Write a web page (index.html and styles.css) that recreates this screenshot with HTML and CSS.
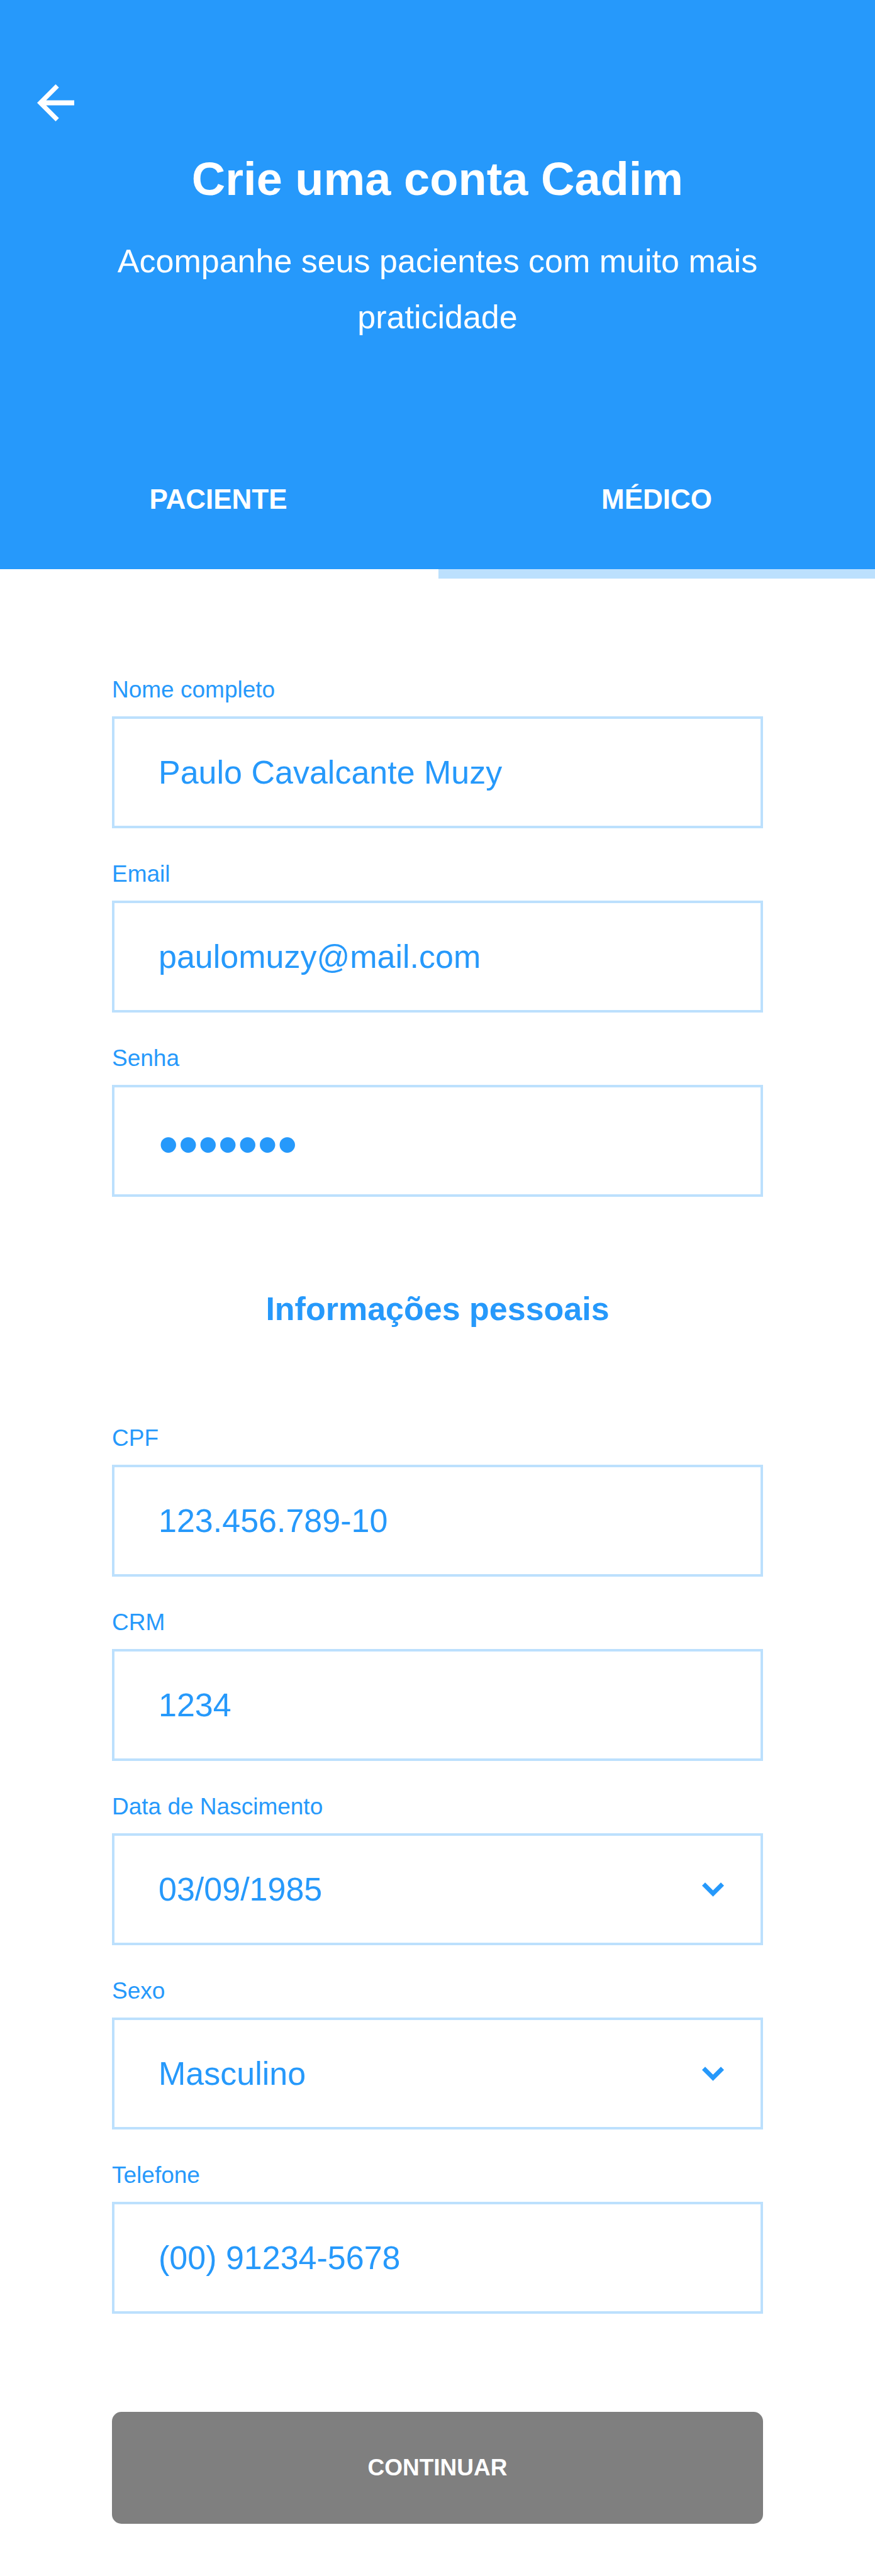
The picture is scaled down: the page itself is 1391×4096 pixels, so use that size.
FILE: index.html
```html
<!DOCTYPE html>
<html lang="pt-BR">
<head>
  <meta charset="utf-8">
  <meta name="viewport" content="width=device-width, initial-scale=1">
  <title>Crie uma conta Cadim</title>
  <link rel="stylesheet" href="styles.css">
</head>
<body>
  <header class="header">
    <a class="back" href="#" aria-label="Voltar">
      <svg class="back-icon" viewBox="4 4 16 16" aria-hidden="true">
        <path fill="currentColor" d="M20 10.9H7.9l5.5-5.5L12 4l-8 8 8 8 1.4-1.4L7.9 13.1H20z"/>
      </svg>
    </a>
    <h1 class="title">Crie uma conta Cadim</h1>
    <p class="subtitle">Acompanhe seus pacientes com muito mais praticidade</p>
    <nav class="tabs">
      <button class="tab" type="button">PACIENTE</button>
      <button class="tab tab-active" type="button" aria-current="true">MÉDICO</button>
    </nav>
  </header>

  <main>
    <form class="form">
      <div class="fields">
        <div class="field">
          <label class="label" for="nome">Nome completo</label>
          <input class="control" id="nome" type="text" value="Paulo Cavalcante Muzy">
        </div>
        <div class="field">
          <label class="label" for="email">Email</label>
          <input class="control" id="email" type="email" value="paulomuzy@mail.com">
        </div>
        <div class="field">
          <label class="label" for="senha">Senha</label>
          <input class="control control-password" id="senha" type="password" value="cadim12">
        </div>
      </div>

      <h2 class="section-title">Informações pessoais</h2>

      <div class="fields">
        <div class="field">
          <label class="label" for="cpf">CPF</label>
          <input class="control" id="cpf" type="text" value="123.456.789-10">
        </div>
        <div class="field">
          <label class="label" for="crm">CRM</label>
          <input class="control" id="crm" type="text" value="1234">
        </div>
        <div class="field">
          <label class="label" for="nascimento">Data de Nascimento</label>
          <div class="picker">
            <select class="control" id="nascimento">
              <option>03/09/1985</option>
            </select>
            <svg class="chevron" viewBox="0 0 28 18" aria-hidden="true">
              <path fill="currentColor" d="M0 4l4-4 10 10L24 0l4 4-14 14z"/>
            </svg>
          </div>
        </div>
        <div class="field">
          <label class="label" for="sexo">Sexo</label>
          <div class="picker">
            <select class="control" id="sexo">
              <option>Masculino</option>
              <option>Feminino</option>
            </select>
            <svg class="chevron" viewBox="0 0 28 18" aria-hidden="true">
              <path fill="currentColor" d="M0 4l4-4 10 10L24 0l4 4-14 14z"/>
            </svg>
          </div>
        </div>
        <div class="field">
          <label class="label" for="telefone">Telefone</label>
          <input class="control" id="telefone" type="tel" value="(00) 91234-5678">
        </div>
      </div>

      <button class="submit" type="button">CONTINUAR</button>
    </form>
  </main>
</body>
</html>
```

FILE: styles.css
```css
:root {
  --blue: #2699fb;
  --light-blue: #bce0fd;
  --gray: #7f7f7f;
}

*,
*::before,
*::after {
  box-sizing: border-box;
}

body {
  margin: 0;
  background: #fff;
  color: var(--blue);
  font-family: "Liberation Sans", Arial, sans-serif;
}

button,
input,
select {
  margin: 0;
  font-family: inherit;
}

/* Header */

.header {
  display: flex;
  flex-direction: column;
  padding-top: 134px;
  background: var(--blue);
  color: #fff;
  text-align: center;
}

.back {
  align-self: flex-start;
  margin-left: 59px;
  color: #fff;
}

.back-icon {
  display: block;
  width: 59px;
  height: 59px;
}

.title {
  margin: 48px 0 42px;
  font-size: 74px;
  line-height: 88px;
}

.subtitle {
  margin: 0;
  padding: 0 178px;
  font-size: 52px;
  line-height: 89px;
}

/* Tabs: the active marker hangs below the header */

.tabs {
  display: grid;
  grid-template-columns: 1fr 1fr;
  column-gap: 3px;
  margin-top: 133px;
}

.tab {
  position: relative;
  padding: 86px 0;
  border: 0;
  background: none;
  color: inherit;
  font-size: 44px;
  font-weight: bold;
  line-height: 51px;
}

.tab-active::after {
  content: "";
  position: absolute;
  top: 100%;
  left: 0;
  width: 100%;
  height: 15px;
  background: var(--light-blue);
}

/* Form */

.form {
  display: flex;
  flex-direction: column;
  padding: 170px 178px 83px;
}

.fields {
  display: flex;
  flex-direction: column;
  gap: 51px;
}

.field {
  display: flex;
  flex-direction: column;
  gap: 21px;
}

.label {
  font-size: 37px;
  line-height: 43px;
}

.control {
  width: 100%;
  height: 178px;
  padding: 0 70px;
  border: 4px solid var(--light-blue);
  border-radius: 0;
  outline: 0;
  background: #fff;
  color: inherit;
  font-size: 52px;
  line-height: 60px;
  appearance: none;
}

/* Larger type gives the masking dots their size */
.control-password {
  padding-top: 12px;
  font-size: 90px;
  line-height: 104px;
}

.picker {
  display: grid;
  align-items: center;
}

.picker > * {
  grid-area: 1 / 1;
}

.chevron {
  justify-self: end;
  width: 35px;
  height: 23px;
  margin-right: 62px;
  pointer-events: none;
}

.section-title {
  margin: 148px 0 154px;
  font-size: 52px;
  line-height: 60px;
  text-align: center;
}

.submit {
  height: 178px;
  margin-top: 156px;
  border: 0;
  border-radius: 15px;
  background: var(--gray);
  color: #fff;
  font-size: 37px;
  font-weight: bold;
}
```
